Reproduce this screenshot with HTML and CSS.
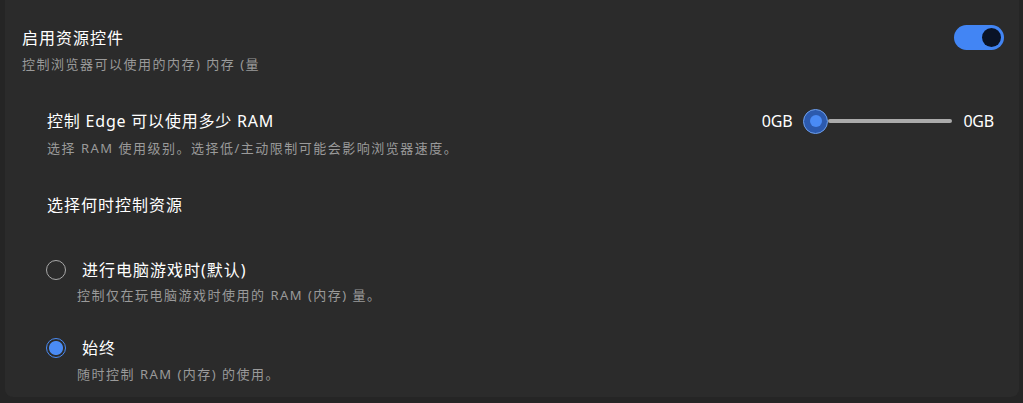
FILE: index.html
```html
<!DOCTYPE html>
<html lang="zh-CN">
<head>
<meta charset="utf-8">
<title>资源控件</title>
<link rel="stylesheet" href="styles.css">
</head>
<body>
<div class="panel">
  <div class="header">
    <div class="text">
      <div class="title">启用资源控件</div>
      <div class="sub">控制浏览器可以使用的内存) 内存 (量</div>
    </div>
    <div class="toggle"><div class="knob"></div></div>
  </div>

  <div class="section ram">
    <div class="text">
      <div class="title">控制 Edge 可以使用多少 RAM</div>
      <div class="sub sub-ram">选择 RAM 使用级别。选择低/主动限制可能会影响浏览器速度。</div>
    </div>
    <div class="slider-row">
      <span class="gb">0GB</span>
      <div class="slider">
        <div class="thumb"><div class="dot"></div></div>
        <div class="track"></div>
      </div>
      <span class="gb">0GB</span>
    </div>
  </div>

  <div class="section when">
    <div class="title">选择何时控制资源</div>
  </div>

  <div class="radio-group">
    <div class="option opt1">
      <div class="radio-row">
        <span class="radio"></span>
        <span class="title">进行电脑游戏时(默认)</span>
      </div>
      <div class="sub opt-sub">控制仅在玩电脑游戏时使用的 RAM (内存) 量。</div>
    </div>
    <div class="option opt2">
      <div class="radio-row">
        <span class="radio checked"></span>
        <span class="title">始终</span>
      </div>
      <div class="sub opt-sub">随时控制 RAM (内存) 的使用。</div>
    </div>
  </div>
</div>
</body>
</html>
```

FILE: styles.css
```css
html, body {
  margin: 0;
  padding: 0;
  background: #252525;
}
body {
  font-family: "Noto Sans", "Noto Sans CJK SC", sans-serif;
  color: #ffffff;
  height: 403px;
  overflow: hidden;
}
.panel {
  margin: 0 4px 0 5px;
  height: 397px;
  box-sizing: border-box;
  background: #2b2b2b;
  border-radius: 0 0 8px 8px;
  padding: 26px 15px 0 17px;
  display: flex;
  flex-direction: column;
}
.title {
  font-size: 16px;
  line-height: 24px;
  letter-spacing: 1px;
  color: #ffffff;
}
.sub {
  font-size: 13px;
  line-height: 20px;
  letter-spacing: 1.5px;
  color: #9a9a9a;
  margin-top: 4px;
}
.header {
  display: flex;
  justify-content: space-between;
  align-items: flex-start;
}
.toggle {
  width: 50px;
  height: 25px;
  border-radius: 13px;
  background: #4285f4;
  margin-top: -1px;
  display: flex;
  align-items: center;
  justify-content: flex-end;
  padding-right: 3px;
  box-sizing: border-box;
}
.knob {
  width: 19px;
  height: 19px;
  border-radius: 50%;
  background: #0a1326;
}
.section {
  display: flex;
  justify-content: space-between;
  align-items: flex-start;
  padding-left: 25px;
}
.ram {
  margin-top: 35px;
  padding-right: 10px;
}
.ram .title {
  letter-spacing: 0.8px;
}
.sub-ram {
  margin-top: 5px;
}
.slider-row {
  display: flex;
  align-items: center;
  height: 24px;
}
.gb {
  font-size: 16px;
  line-height: 24px;
  letter-spacing: -0.2px;
}
.slider {
  display: flex;
  align-items: center;
  margin: 0 11px 0 11px;
}
.thumb {
  width: 25px;
  height: 25px;
  box-sizing: border-box;
  border-radius: 50%;
  border: 1.5px solid #6e9fec;
  background: #2c5aae;
  display: flex;
  align-items: center;
  justify-content: center;
  position: relative;
  z-index: 1;
}
.dot {
  width: 12px;
  height: 12px;
  border-radius: 50%;
  background: #4a8bf5;
}
.track {
  width: 124px;
  height: 4px;
  border-radius: 2px;
  background: #ababab;
}
.when {
  margin-top: 35px;
}
.radio-group {
  padding-left: 24px;
  display: flex;
  flex-direction: column;
}
.opt1 {
  margin-top: 41px;
}
.opt2 {
  margin-top: 31px;
}
.radio-row {
  display: flex;
  align-items: center;
}
.radio {
  width: 20px;
  height: 20px;
  box-sizing: border-box;
  border-radius: 50%;
  border: 1.5px solid #a8a8a8;
  margin-right: 16px;
  flex: none;
}
.radio.checked {
  border-color: #4a8bf5;
  background: radial-gradient(circle, #4a8bf5 0 6.5px, #2b2b2b 7.5px);
}
.opt-sub {
  margin-left: 31px;
  margin-top: 3px;
}
.opt2 .opt-sub {
  margin-top: 4px;
}
```
